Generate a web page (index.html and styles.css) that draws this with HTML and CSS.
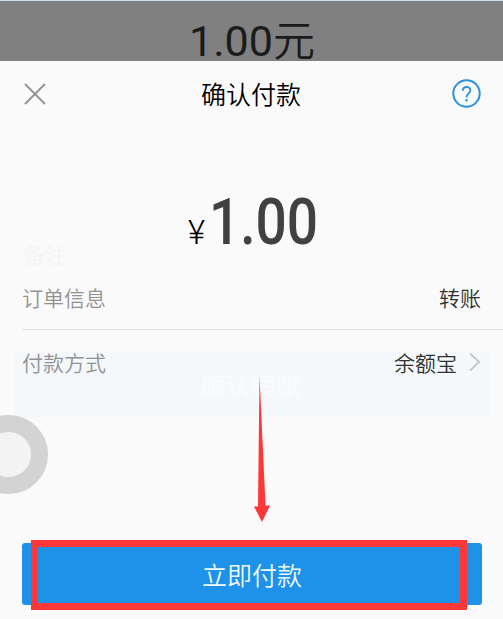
FILE: index.html
```html
<!DOCTYPE html>
<html lang="zh-CN">
<head>
    <meta charset="UTF-8">
    <meta name="viewport" content="width=device-width, initial-scale=1.0">
    <title>确认付款</title>
    <link rel="stylesheet" href="styles.css">
</head>
<body>
    <div class="backdrop">
        <span class="backdrop-amount">1.00<span class="unit">元</span></span>
    </div>
    <div class="sheet">
        <!-- page behind the sheet, showing through -->
        <div class="ghost-remark">备注</div>
        <div class="ghost-button">确认转账</div>

        <div class="header">
            <svg class="close" viewBox="0 0 22 22" width="22" height="22">
                <path d="M1 1 L21 21 M21 1 L1 21" fill="none" stroke="#959595" stroke-width="2"/>
            </svg>
            <h1>确认付款</h1>
            <svg class="help" viewBox="0 0 30 30" width="30" height="30">
                <circle cx="15.5" cy="14.5" r="13.2" fill="none" stroke="#2b90dd" stroke-width="2"/>
                <path d="M11.8 11.8 C11.8 6.8 19.4 6.8 19.4 11.4 C19.4 14.4 15.5 14.6 15.5 18.4" fill="none" stroke="#2b90dd" stroke-width="1.8"/>
                <circle cx="15.5" cy="21.2" r="1.2" fill="#2b90dd"/>
            </svg>
        </div>

        <div class="amount">
            <span class="currency">¥</span>
            <span class="number">1.00</span>
        </div>

        <div class="row order">
            <span class="label">订单信息</span>
            <span class="value">转账</span>
        </div>
        <div class="row method">
            <span class="label">付款方式</span>
            <span class="value">余额宝</span>
            <svg class="chevron" viewBox="0 0 12 20" width="12" height="20">
                <path d="M1 1.5 L10 10 L1 18.5" fill="none" stroke="#c5c7c9" stroke-width="2"/>
            </svg>
        </div>

        <button class="pay">立即付款</button>
    </div>

    <div class="touch-ball"></div>
    <svg class="arrow" viewBox="0 0 18 148" width="18" height="148">
        <path d="M6.5 2 L12.5 131.5 L17 131.5 L9 148 L1 132.5 L5 132.5 Z" fill="#fd3839"/>
    </svg>
    <div class="highlight"></div>
</body>
</html>
```
FILE: styles.css
```css
* {
    box-sizing: border-box;
}
body {
    margin: 0;
    height: 619px;
    position: relative;
    overflow: hidden;
    background-color: #fafafa;
    font-family: Roboto, "Noto Sans CJK SC", sans-serif;
}
.backdrop {
    height: 61px;
    border-top: 1px solid #cfe0ee;
    background-color: #808080;
    text-align: center;
}
.backdrop-amount {
    display: block;
    padding-top: 20px;
    padding-left: 1px;
    line-height: 40px;
    font-size: 43px;
    color: #1b1b1b;
}
.unit {
    font-size: 42px;
    font-weight: 350;
}
.sheet {
    height: 558px;
    padding: 0 22px;
}
.ghost-remark {
    position: absolute;
    left: 23px;
    top: 240px;
    line-height: 32px;
    font-size: 22px;
    color: #f5f5f5;
}
.ghost-button {
    position: absolute;
    left: 14px;
    top: 352px;
    width: 476px;
    height: 65px;
    line-height: 70px;
    padding-right: 3px;
    text-align: center;
    font-size: 25px;
    font-weight: 500;
    color: #fafbfc;
    background-color: #f4f8fb;
}
.header {
    display: flex;
    justify-content: space-between;
    align-items: center;
    height: 65px;
    padding-left: 2px;
}
h1 {
    margin: 0;
    padding: 4px 0 0 5px;
    font-size: 25px;
    font-weight: 350;
    line-height: 36px;
    color: #000;
}
.amount {
    display: flex;
    align-items: baseline;
    height: 145px;
    padding: 59px 0 0 166px;
    line-height: 76px;
}
.currency {
    width: 21px;
    font-size: 33px;
    font-weight: 300;
    color: #000;
}
.number {
    font-size: 64px;
    font-weight: 500;
    color: #414141;
    transform: scaleX(0.86);
    transform-origin: left;
}
.row {
    position: relative;
    display: flex;
    align-items: center;
    font-size: 21px;
}
.label {
    flex: 1;
    color: #929292;
    font-weight: 350;
}
.value {
    color: #303030;
    font-weight: 350;
}
.order {
    height: 59px;
    padding-bottom: 7px;
    margin-right: -22px;
    padding-right: 22px;
    border-bottom: 1px solid #e3e3e3;
}
.method {
    height: 65px;
    padding-bottom: 2px;
}
.chevron {
    margin-left: 12px;
}
.pay {
    display: block;
    width: 460px;
    height: 62px;
    margin-top: 148px;
    padding: 0 0 1px;
    border: none;
    border-radius: 3px;
    background-color: #1e91e8;
    color: #eefaff;
    font-family: inherit;
    font-size: 25px;
    font-weight: 350;
}
/* floating assistive button, half off screen */
.touch-ball {
    position: absolute;
    left: -31px;
    top: 415px;
    width: 79px;
    height: 79px;
    border: 17px solid #d3d3d3;
    border-radius: 50%;
    background-color: #f3f3f3;
}
.arrow {
    position: absolute;
    left: 253px;
    top: 374px;
}
.highlight {
    position: absolute;
    left: 31px;
    top: 540px;
    width: 436px;
    height: 70px;
    border: 7px solid #fd3839;
}
```
